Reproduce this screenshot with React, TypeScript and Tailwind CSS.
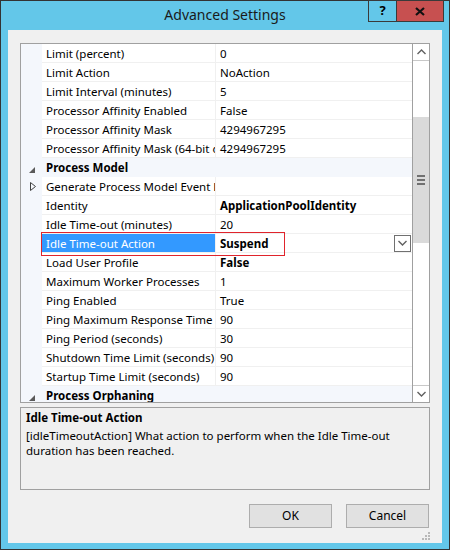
import React from "react";

type Row =
  | { kind: "cat"; label: string }
  | { kind: "prop"; label: string; value: string; bold?: boolean; expand?: boolean; selected?: boolean };

const ROWS: Row[] = [
  { kind: "prop", label: "Limit (percent)", value: "0" },
  { kind: "prop", label: "Limit Action", value: "NoAction" },
  { kind: "prop", label: "Limit Interval (minutes)", value: "5" },
  { kind: "prop", label: "Processor Affinity Enabled", value: "False" },
  { kind: "prop", label: "Processor Affinity Mask", value: "4294967295" },
  { kind: "prop", label: "Processor Affinity Mask (64-bit option)", value: "4294967295" },
  { kind: "cat", label: "Process Model" },
  { kind: "prop", label: "Generate Process Model Event Log Entry", value: "", expand: true },
  { kind: "prop", label: "Identity", value: "ApplicationPoolIdentity", bold: true },
  { kind: "prop", label: "Idle Time-out (minutes)", value: "20" },
  { kind: "prop", label: "Idle Time-out Action", value: "Suspend", bold: true, selected: true },
  { kind: "prop", label: "Load User Profile", value: "False", bold: true },
  { kind: "prop", label: "Maximum Worker Processes", value: "1" },
  { kind: "prop", label: "Ping Enabled", value: "True" },
  { kind: "prop", label: "Ping Maximum Response Time (seconds)", value: "90" },
  { kind: "prop", label: "Ping Period (seconds)", value: "30" },
  { kind: "prop", label: "Shutdown Time Limit (seconds)", value: "90" },
  { kind: "prop", label: "Startup Time Limit (seconds)", value: "90" },
  { kind: "cat", label: "Process Orphaning" },
];

function Collapse() {
  return (
    <svg width="6" height="6" viewBox="0 0 6 6">
      <polygon points="6,0 6,6 0,6" fill="#5a5a5a" />
    </svg>
  );
}

function Expand() {
  return (
    <svg width="6" height="9" viewBox="0 0 6 9">
      <polygon points="0.5,0.5 5.5,4.5 0.5,8.5" fill="none" stroke="#404040" strokeWidth="1" />
    </svg>
  );
}

function Chevron({ up }: { up?: boolean }) {
  return (
    <svg width="9" height="6" viewBox="0 0 9 6">
      <polyline
        points={up ? "0.5,5 4.5,1 8.5,5" : "0.5,1 4.5,5 8.5,1"}
        fill="none"
        stroke="#606060"
        strokeWidth="1.4"
      />
    </svg>
  );
}

function GridRow({ row }: { row: Row }) {
  if (row.kind === "cat") {
    return (
      <div className="flex h-[19px] shrink-0 items-center bg-[#f4f7fc] pt-[1px]">
        <div className="flex w-[21px] shrink-0 items-center justify-end pr-[7px] pt-[3px]">
          <Collapse />
        </div>
        <div className="pl-[4px] font-bold text-black">{row.label}</div>
      </div>
    );
  }
  return (
    <div className="flex h-[19px] shrink-0">
      <div className="flex w-[21px] shrink-0 items-center justify-end bg-[#f4f7fc] pr-[6px]">
        {row.expand && <Expand />}
      </div>
      <div className="flex w-[174px] shrink-0 flex-col border-r border-[#f0f0f0]">
        <div
          className={
            row.selected
              ? "flex h-[18px] items-center overflow-hidden whitespace-nowrap bg-[#3399ff] pl-[4px] pt-[1px] text-white"
              : "flex h-[18px] items-center overflow-hidden whitespace-nowrap pl-[4px] pt-[1px] text-black"
          }
        >
          {row.label}
        </div>
        <div className="h-[1px] bg-[#f0f0f0]" />
      </div>
      <div className="flex min-w-0 flex-1 flex-col">
        <div className="flex h-[18px] items-center pl-[4px] text-black">
          <span className={row.bold ? "pt-[1px] font-bold" : "pt-[1px]"}>{row.value}</span>
          {row.selected && (
            <div className="ml-auto mr-[1px] flex h-[17px] w-[17px] items-center justify-center border border-[#707070] bg-white">
              <Chevron />
            </div>
          )}
        </div>
        <div className="h-[1px] bg-[#f0f0f0]" />
      </div>
    </div>
  );
}

export default function App() {
  return (
    <div
      className="flex h-[550px] w-[450px] flex-col border border-[#333333] bg-[#63c7e9] text-[11.5px]"
      style={{ fontFamily: '"Noto Sans", "Open Sans", sans-serif' }}
    >
      {/* Title bar */}
      <div className="relative flex h-[29px] shrink-0 items-center justify-center">
        <div className="pb-[2px] text-[14px] text-[#1a1a1a]">Advanced Settings</div>
        <div className="absolute right-[5px] top-[-1px] flex h-[22px]">
          <div className="flex w-[29px] items-center justify-center border border-[#3a3a3a] bg-[#63c7e9] text-[13px] font-bold text-black">
            ?
          </div>
          <div className="flex w-[47px] items-center justify-center border border-l-0 border-[#3a3a3a] bg-[#c75050]">
            <svg width="10" height="9" viewBox="0 0 10 9">
              <path d="M1 1 L9 8 M9 1 L1 8" stroke="#111" strokeWidth="2.2" />
            </svg>
          </div>
        </div>
      </div>

      {/* Client area */}
      <div className="mx-[7px] mb-[6px] flex flex-1 flex-col bg-[#f0f0f0] px-[12px] pt-[13px]">
        {/* Property grid */}
        <div className="relative flex h-[360px] shrink-0 border border-[#a0a0a0] bg-white">
          <div className="flex min-w-0 flex-1 flex-col overflow-hidden">
            {ROWS.map((r, i) => (
              <GridRow key={i} row={r} />
            ))}
          </div>
          {/* Scrollbar */}
          <div className="flex w-[17px] shrink-0 flex-col border-l border-[#a0a0a0] bg-white">
            <div className="flex h-[17px] shrink-0 items-center justify-center border-b border-[#c8c8c8]">
              <Chevron up />
            </div>
            <div className="flex flex-1 flex-col">
              <div className="h-[56px]" />
              <div className="flex h-[126px] items-center justify-center bg-[#dadada]">
                <div className="flex flex-col gap-[2px]">
                  <div className="h-[2px] w-[8px] bg-[#707070]" />
                  <div className="h-[2px] w-[8px] bg-[#707070]" />
                  <div className="h-[2px] w-[8px] bg-[#707070]" />
                </div>
              </div>
            </div>
            <div className="flex h-[17px] shrink-0 items-center justify-center border-t border-[#c8c8c8]">
              <Chevron />
            </div>
          </div>
          {/* Red annotation box */}
          <div className="pointer-events-none absolute left-[20px] top-[188px] h-[24px] w-[244px] border border-[#e0242c]" />
        </div>

        {/* Description */}
        <div className="mt-[4px] h-[83px] shrink-0 border border-[#a0a0a0] px-[5px] pt-[2px] text-black">
          <div className="font-bold leading-[16px]">Idle Time-out Action</div>
          <div className="mt-[2px] pr-[20px] leading-[15px]">
            [idleTimeoutAction] What action to perform when the Idle Time-out duration has been reached.
          </div>
        </div>

        {/* Buttons */}
        <div className="mt-[14px] flex justify-end gap-[14px] pr-[1px]">
          <div className="flex h-[24px] w-[83px] items-center justify-center border border-[#adadad] bg-[#e1e1e1] text-[12px] text-black">
            OK
          </div>
          <div className="flex h-[24px] w-[83px] items-center justify-center border border-[#adadad] bg-[#e1e1e1] text-[12px] text-black">
            Cancel
          </div>
        </div>

        {/* Resize grip */}
        <div className="mt-auto flex justify-end pb-[3px] pr-[0px]">
          <svg width="10" height="10" viewBox="0 0 10 10">
            <rect x="8" y="2" width="2" height="2" fill="#b8b8b8" />
            <rect x="5" y="5" width="2" height="2" fill="#b8b8b8" />
            <rect x="8" y="5" width="2" height="2" fill="#b8b8b8" />
            <rect x="2" y="8" width="2" height="2" fill="#b8b8b8" />
            <rect x="5" y="8" width="2" height="2" fill="#b8b8b8" />
            <rect x="8" y="8" width="2" height="2" fill="#b8b8b8" />
          </svg>
        </div>
      </div>
    </div>
  );
}
